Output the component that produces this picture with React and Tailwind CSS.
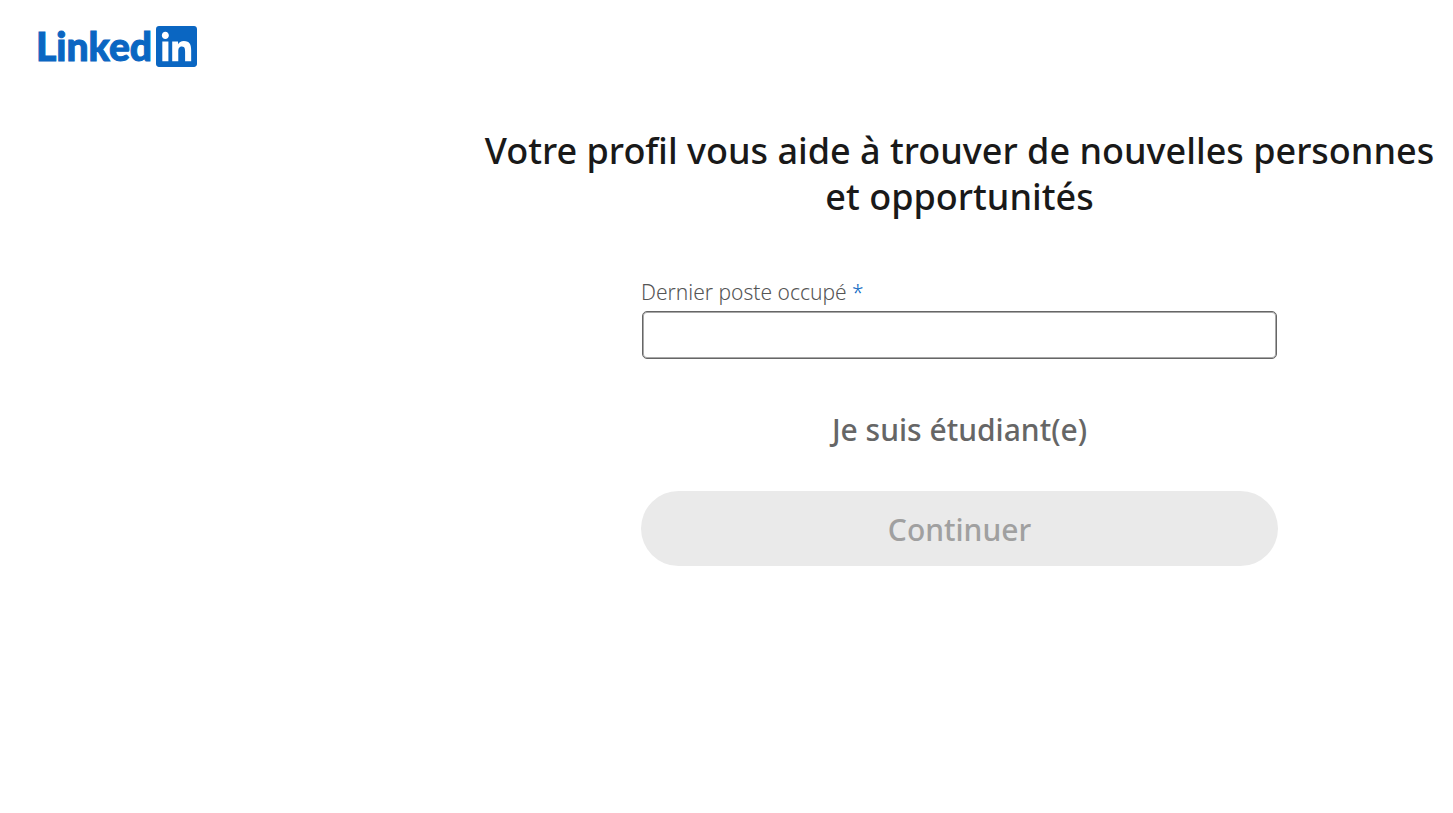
import { FaLinkedin } from "react-icons/fa";

function Logo() {
  return (
    <a href="#accueil" aria-label="LinkedIn" className="flex w-fit items-center gap-1 text-[#0a66c2]">
      <span className="font-['Lato',sans-serif] text-[39px] leading-[47px] font-black [-webkit-text-stroke:1px_#0a66c2]">
        Linked
      </span>
      <FaLinkedin size={47} className="w-[41px]" />
    </a>
  );
}

export default function App() {
  return (
    <div className="min-h-screen bg-white font-['Noto_Sans',sans-serif]">
      <header className="px-9 pt-[23px]">
        <Logo />
      </header>
      <main className="flex flex-col items-center pt-[58px] pl-[466px]">
        <h1 className="max-w-[960px] text-center text-[36px] leading-[46px] font-medium text-[#191919]">
          Votre profil vous aide à trouver de nouvelles personnes et opportunités
        </h1>
        <form className="mt-[57px] flex w-full max-w-[637px] flex-col" onSubmit={(e) => e.preventDefault()}>
          <label htmlFor="poste" className="text-[21px] leading-[30px] font-light text-[#555555]">
            Dernier poste occupé <span className="text-[#0a66c2]">*</span>
          </label>
          <div className="mt-1 flex px-px">
            <input
              id="poste"
              type="text"
              required
              className="h-12 w-full rounded-[5px] border border-[#666666] bg-white px-3 text-[21px] text-[#191919] shadow-[inset_0_0_0_1px_#a8a8a8] outline-none"
            />
          </div>
          <button type="button" className="mt-12 self-center text-[30px] leading-[46px] font-medium text-[#666666]">
            Je suis étudiant(e)
          </button>
          <button
            type="submit"
            disabled
            className="mt-[38px] h-[75px] w-full rounded-full bg-[#eaeaea] pt-0.5 text-[30px] font-medium text-[#a0a0a0]"
          >
            Continuer
          </button>
        </form>
      </main>
    </div>
  );
}
